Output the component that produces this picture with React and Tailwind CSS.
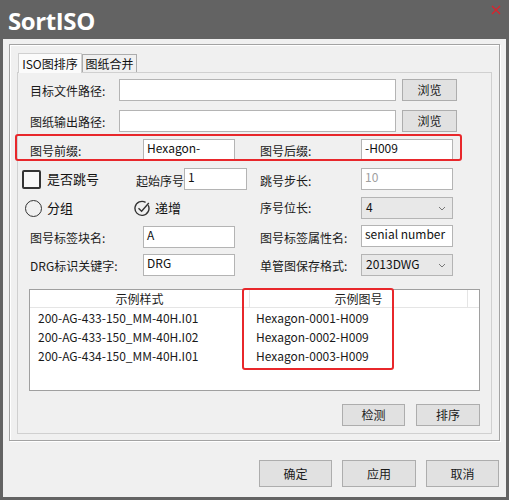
import React from 'react';

const font = { fontFamily: '"Noto Sans CJK SC", "Noto Sans", sans-serif' };

function Btn({ children, w, h = 'h-[22px]' }) {
  return (
    <div className={`${w} ${h} flex items-center justify-center border border-[#adadad] bg-[#e1e1e1] text-[12px] text-[#1a1a1a]`}>
      {children}
    </div>
  );
}

function Field({ value, w = 'w-[92px]', disabled }) {
  return (
    <div className={`${w} h-[22px] border border-[#b4b4b4] bg-white pl-[3px] text-[12px] leading-[16px] ${disabled ? 'text-[#a0a0a0]' : 'text-[#111]'}`}>
      {value}
    </div>
  );
}

function Select({ value }) {
  return (
    <div className="w-[92px] h-[22px] border border-[#b4b4b4] bg-[#e8e8e8] flex items-center justify-between pl-[4px] pr-[6px] text-[12px] text-[#111]">
      <span className="-mt-[3px]">{value}</span>
      <svg width="8" height="5" viewBox="0 0 8 5"><path d="M1 1 L4 4 L7 1" fill="none" stroke="#777" strokeWidth="1" /></svg>
    </div>
  );
}

function Label({ children, w }) {
  return <div className={`${w} whitespace-nowrap text-[12px] text-[#1a1a1a] pt-[3px]`}>{children}</div>;
}

const rows = [
  ['200-AG-433-150_MM-40H.I01', 'Hexagon-0001-H009'],
  ['200-AG-433-150_MM-40H.I02', 'Hexagon-0002-H009'],
  ['200-AG-434-150_MM-40H.I01', 'Hexagon-0003-H009'],
];

export default function App() {
  return (
    <div className="relative w-[509px] h-[500px] bg-[#636363] flex flex-col overflow-hidden" style={font}>
      {/* title bar */}
      <div className="relative h-[39px] shrink-0">
        <div className="absolute left-[8px] top-[6px] text-[24px] font-bold tracking-[-0.4px] text-white leading-[30px]" style={{ fontFamily: '"Open Sans", "Noto Sans", sans-serif' }}>
          SortISO
        </div>
        <svg className="absolute left-[491px] top-[5px]" width="10" height="10" viewBox="0 0 10 10">
          <path d="M1 1 L9 9 M9 1 L1 9" stroke="#e0202a" strokeWidth="1.2" />
        </svg>
      </div>

      {/* body */}
      <div className="flex-1 mx-[3px] mb-[3px] bg-[#f0f0f0] flex flex-col">
        <div className="mt-[5px] ml-[6px] w-[491px] h-[397px] border border-[#a3a3a3] shadow-[inset_1px_1px_0_#ffffff,1px_1px_0_#ffffff] pl-[7px] pt-[7px]">
          {/* tabs */}
          <div className="flex items-end h-[20px] ml-[1px]">
            <div className="relative z-10 w-[64px] h-[20px] -mb-px bg-[#fbfbfb] border border-[#d0d0d0] border-b-0 flex items-center justify-center text-[12px] text-[#111]">
              ISO图排序
            </div>
            <div className="w-[55px] h-[18px] bg-[#f0f0f0] border border-[#acacac] border-b-0 flex items-center justify-center text-[12px] text-[#111]">
              图纸合并
            </div>
          </div>

          {/* tab page */}
          <div className="w-[475px] h-[362px] border border-[#d0d0d0] bg-[#f0f0f0] flex flex-col">
            <div className="mt-[6px] ml-[12px] flex h-[22px]">
              <Label w="w-[89px]">目标文件路径:</Label>
              <Field w="w-[277px]" value="" />
              <div className="ml-[6px]"><Btn w="w-[55px]">浏览</Btn></div>
            </div>
            <div className="mt-[9px] ml-[12px] flex h-[22px]">
              <Label w="w-[89px]">图纸输出路径:</Label>
              <Field w="w-[277px]" value="" />
              <div className="ml-[6px]"><Btn w="w-[55px]">浏览</Btn></div>
            </div>
            <div className="mt-[7px] ml-[12px] flex h-[22px]">
              <Label w="w-[113px]">图号前缀:</Label>
              <Field value="Hexagon-" />
              <div className="w-[25px]" />
              <Label w="w-[101px]">图号后缀:</Label>
              <Field value="-H009" />
            </div>
            <div className="mt-[7px] ml-[4px] flex h-[22px] items-center">
              <div className="w-[114px] flex items-center">
                <div className="w-[19px] h-[19px] border-2 border-[#333] rounded-[2px] bg-[#f7f7f7]" />
                <span className="ml-[6px] text-[13px] text-[#111]">是否跳号</span>
              </div>
              <div className="w-[48px] whitespace-nowrap text-[12px] text-[#1a1a1a] pt-[4px]">起始序号</div>
              <div className="self-start"><Field w="w-[63px]" value="1" /></div>
              <div className="w-[13px]" />
              <Label w="w-[101px]">跳号步长:</Label>
              <Field value="10" disabled />
            </div>
            <div className="mt-[7px] ml-[7px] flex h-[22px] items-center">
              <div className="w-[109px] flex items-center">
                <div className="w-[17px] h-[17px] rounded-full border-[1.5px] border-[#333]" />
                <span className="ml-[5px] text-[13px] text-[#111]">分组</span>
              </div>
              <div className="w-[126px] flex items-center">
                <svg width="17" height="17" viewBox="0 0 17 17">
                  <path d="M14.2 5.2 A7 7 0 1 1 11.6 2.4" fill="none" stroke="#333" strokeWidth="1.4" />
                  <path d="M4.5 8.2 L7.6 11.2 L14.8 3" fill="none" stroke="#333" strokeWidth="1.4" />
                </svg>
                <span className="ml-[4px] text-[13px] text-[#111]">递增</span>
              </div>
              <div className="w-[101px] text-[12px] text-[#1a1a1a]">序号位长:</div>
              <Select value="4" />
            </div>
            <div className="mt-[7px] ml-[12px] flex h-[22px]">
              <Label w="w-[113px]">图号标签块名:</Label>
              <Field value="A" />
              <div className="w-[25px]" />
              <Label w="w-[101px]">图号标签属性名:</Label>
              <div className="-mt-px"><Field value="senial number" /></div>
            </div>
            <div className="mt-[6px] ml-[12px] flex h-[22px]">
              <Label w="w-[113px]">DRG标识关键字:</Label>
              <Field value="DRG" />
              <div className="w-[25px]" />
              <Label w="w-[101px]">单管图保存格式:</Label>
              <Select value="2013DWG" />
            </div>

            {/* list view */}
            <div className="mt-[13px] ml-[11px] w-[451px] h-[102px] border border-[#a0a0a0] bg-white flex flex-col">
              <div className="flex h-[18px] border-b border-[#e5e5e5] text-[12px] text-[#1a1a1a]">
                <div className="w-[220px] border-r border-[#e5e5e5] flex items-center justify-center">示例样式</div>
                <div className="w-[218px] border-r border-[#e5e5e5] flex items-center justify-center">示例图号</div>
              </div>
              {rows.map(([a, b]) => (
                <div key={a} className="flex h-[19px] items-center text-[12px] text-[#1a1a1a]">
                  <div className="w-[220px] pl-[8px]">{a}</div>
                  <div className="pl-[6px]">{b}</div>
                </div>
              ))}
            </div>

            <div className="mt-[13px] mr-[11px] flex justify-end gap-[11px]">
              <Btn w="w-[63px]">检测</Btn>
              <Btn w="w-[64px]">排序</Btn>
            </div>
          </div>
        </div>

        <div className="mt-[19px] mr-[7px] flex justify-end gap-[10px]">
          <Btn w="w-[73px]" h="h-[27px]">确定</Btn>
          <Btn w="w-[74px]" h="h-[27px]">应用</Btn>
          <Btn w="w-[73px]" h="h-[27px]">取消</Btn>
        </div>
      </div>

      {/* annotation boxes */}
      <div className="absolute left-[15px] top-[134px] w-[447px] h-[27px] border-2 border-[#e8272b] rounded-[3px]" />
      <div className="absolute left-[242px] top-[288px] w-[152px] h-[82px] border-2 border-[#e8272b] rounded-[3px]" />
    </div>
  );
}
